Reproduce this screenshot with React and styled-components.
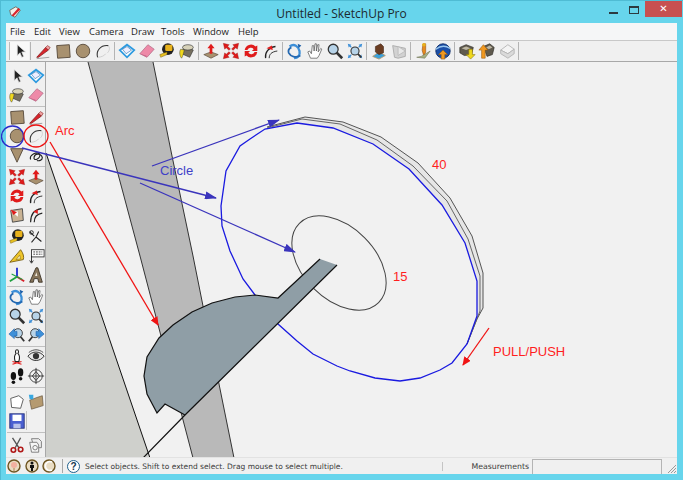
import styled, { createGlobalStyle } from "styled-components";

const GlobalStyle = createGlobalStyle`
  html, body { margin: 0; padding: 0; background: #67d5ec; }
  body { width: 683px; height: 480px; overflow: hidden; }
`;

const BROWN = "#a8916f";
const RED = "#e01b1b";
const BLUE = "#3d8fd8";

const moveArm = "M1.500 1.500l6.500 1.500-1.700 1.700 3 3-1.600 1.600-3-3L3 8z";

// 20x20 toolbar drawings
const icons = {
  select: <path d="M7 3v12l3-3 2 5 2-1-2-5h4z" fill="#222" stroke="#ddd" strokeWidth=".8" />,
  pencil: (
    <>
      <path d="M3 17l10-11 3 3-11 8z" fill="#d8242c" stroke="#7a1515" strokeWidth=".8" />
      <path d="M13 6l2-2 3 2-2 3z" fill="#f0a0a0" stroke="#7a1515" strokeWidth=".6" />
      <path d="M3 18.500l14-1.500" stroke="#999" fill="none" />
    </>
  ),
  rect: <path d="M3 4l14-1 1 14-14 1z" fill={BROWN} stroke="#56483a" />,
  circle: <circle cx="10" cy="10" r="7.500" fill={BROWN} stroke="#56483a" />,
  arc: (
    <>
      <path d="M4 17C2 10 7 3 16 4" fill="none" stroke="#333" strokeWidth="1.200" />
      <path d="M16 4c2 3 1 6-1 8M4 17c4 0 8-2 9-4" fill="none" stroke="#ccc" />
    </>
  ),
  polygon: <path d="M3 3h14l-7 15z" fill={BROWN} stroke="#56483a" />,
  freehand: <path d="M4 15c-2-5 8-10 10-6 2 5-8 9-6 3 1-4 8-4 9 1 0 3-4 4-6 3" fill="none" stroke="#222" strokeWidth="1.300" />,
  component: (
    <>
      <path d="M2 9l8-6 8 6-8 8z" fill="#fff" stroke="#2d9ae0" strokeWidth="2" />
      <path d="M5 8l5-3 5 4-6 4z" fill="#eef" stroke="#0d5f9c" strokeWidth=".6" />
    </>
  ),
  eraser: (
    <>
      <path d="M2 13L11 3l7 5-8 9z" fill="#ee8aa8" stroke="#a8607a" strokeWidth=".7" />
      <path d="M2 13l7 2 1 2z" fill="#c9688a" />
    </>
  ),
  tape: (
    <>
      <circle cx="11" cy="8" r="6.500" fill="#222" />
      <rect x="8" y="3" width="8" height="7" rx="1.500" fill="#e8b21c" />
      <path d="M2 14l8-3v3l-7 3z" fill="#e8c020" stroke="#6a5410" strokeWidth=".5" />
    </>
  ),
  paint: (
    <>
      <path d="M7 4l10 5-4 8-9-4z" fill="#77705f" stroke="#333" strokeWidth=".7" />
      <ellipse cx="11" cy="6" rx="6" ry="3" fill="#d6d1b8" stroke="#333" strokeWidth=".7" />
      <path d="M3 8c-2 3-1 8 1 10 2-3 2-6 3-9z" fill="#f0d81c" stroke="#333" strokeWidth=".5" />
    </>
  ),
  pushpull: (
    <>
      <path d="M2 14l8-3 8 3-8 4z" fill={BROWN} stroke="#56483a" strokeWidth=".7" />
      <path d="M10 2l4 5h-2.500v6h-3V7H6z" fill={RED} />
    </>
  ),
  move: (
    <g fill={RED} stroke="#8a1010" strokeWidth=".4">
      <path d={moveArm} />
      <path d={moveArm} transform="rotate(90 10 10)" />
      <path d={moveArm} transform="rotate(180 10 10)" />
      <path d={moveArm} transform="rotate(270 10 10)" />
    </g>
  ),
  rotate: (
    <>
      <path d="M3 9a7 7 0 0 1 12-4l2-1v6h-6l2-2a4 4 0 0 0-7 1z" fill={RED} />
      <path d="M17 11a7 7 0 0 1-12 4l-2 1v-6h6l-2 2a4 4 0 0 0 7-1z" fill={RED} />
    </>
  ),
  follow: (
    <>
      <path d="M4 18c-1-6 3-12 11-13" fill="none" stroke="#222" strokeWidth="1.400" />
      <path d="M8 18c0-4 2-7 9-8" fill="none" stroke="#222" />
      <path d="M5 7l6-3 1 5z" fill={RED} />
    </>
  ),
  scale: (
    <>
      <path d="M3 5l13-2 1 13-12 2z" fill="#c9b394" stroke="#444" />
      <path d="M3 5l8 1v6z" fill="#fff" />
      <path d="M3 4l7 3-4 3z" fill={RED} />
    </>
  ),
  offset: (
    <>
      <path d="M4 18C4 10 8 4 16 3M8 18c0-5 3-9 9-10" fill="none" stroke="#222" strokeWidth="1.300" />
      <path d="M7 6l5-2v5z" fill={RED} />
    </>
  ),
  dim: (
    <>
      <path d="M3 4l5 5M13 4l-3 6 6 5M10 10l-5 6" fill="none" stroke="#222" strokeWidth="1.200" />
      <circle cx="5" cy="5" r="2" fill="none" stroke="#222" />
    </>
  ),
  protractor: (
    <>
      <path d="M2 17L14 3c3 4 4 8 3 11z" fill="#eec52a" stroke="#7a6010" />
      <path d="M9 14l4-5 1 4z" fill="#fff2b0" stroke="#7a6010" strokeWidth=".6" />
    </>
  ),
  label: (
    <>
      <rect x="5" y="3" width="14" height="8" fill="#fff" stroke="#333" />
      <path d="M7 5.500h10M7 8h10" stroke="#333" strokeDasharray="2 1" />
      <path d="M5 10v7M3 15l2 3 2-3" fill="none" stroke="#222" />
    </>
  ),
  axes: (
    <>
      <path d="M10 2v10" stroke="#1d2ad0" strokeWidth="2" />
      <path d="M10 12l8 5" stroke="#d8202a" strokeWidth="2" />
      <path d="M10 12l-8 5" stroke="#20a040" strokeWidth="2" />
      <path d="M4 9l12 6" stroke="#20a040" strokeWidth="1.200" />
    </>
  ),
  text3d: (
    <>
      <path d="M3 18L10 2h2l5 16h-4l-1-4H8l-1 4z" fill="#86745a" stroke="#3d3428" />
      <path d="M9 11l1.500-4 1 4z" fill="#efe9dd" />
    </>
  ),
  orbit: (
    <>
      <path d="M4 5c5-4 10 0 11 5s-2 8-6 8" fill="none" stroke={BLUE} strokeWidth="2.600" />
      <path d="M16 15c-5 3-11 1-13-3-1-3 1-5 3-6" fill="none" stroke="#2468b0" strokeWidth="2" />
      <path d="M13 2l4 2-3 3z" fill="#1d5fa8" />
    </>
  ),
  hand: <path d="M5 18L2 11l2-1 2 3 1-9 1.500 0 .5 6 1-8h1.500l0 8 1.500-7h1.500l-1 8 3-4 1 1-3 7-2 3z" fill="#fff" stroke="#555" strokeWidth=".8" />,
  zoom: (
    <>
      <path d="M11 11l7 7" stroke="#333" strokeWidth="3" />
      <circle cx="8" cy="8" r="5.500" fill="#b7d3e8" stroke="#333" strokeWidth="1.400" />
    </>
  ),
  zoomExtents: (
    <>
      <path d="M2 2l4 1-3 3zM18 2l-1 4-3-3zM2 18l1-4 3 3zM18 18l-4-1 3-3z" fill={BLUE} />
      <path d="M4 4l2 2M16 4l-2 2M4 16l2-2" stroke={BLUE} strokeWidth="1.400" />
      <path d="M12 12l5 5" stroke="#333" strokeWidth="2" />
      <circle cx="10" cy="10" r="4.500" fill="#b7d3e8" stroke="#333" strokeWidth="1.200" />
    </>
  ),
  prev: (
    <>
      <circle cx="11" cy="8" r="5" fill="#b7d3e8" stroke="#333" />
      <path d="M1 9l6-6v3h3v5H7v3z" fill={BLUE} stroke="#1d5fa8" strokeWidth=".6" />
      <path d="M14 12l4 5" stroke="#333" strokeWidth="2" />
    </>
  ),
  next: (
    <>
      <circle cx="9" cy="8" r="5" fill="#b7d3e8" stroke="#333" />
      <path d="M19 9l-6-6v3h-3v5h3v3z" fill={BLUE} stroke="#1d5fa8" strokeWidth=".6" />
      <path d="M6 12l-4 5" stroke="#333" strokeWidth="2" />
    </>
  ),
  position: (
    <>
      <path d="M5 18l10-3M5 15l10 3" stroke={RED} strokeWidth="1.200" />
      <path d="M10 2c-2 0-2 3-1 4-2 2-2 6-1 9h4c1-3 1-7-1-9 1-1 1-4-1-4z" fill="#fff" stroke="#222" strokeWidth="1.200" />
    </>
  ),
  look: (
    <>
      <path d="M1 9c5-6 13-6 18 0-4 6-13 7-18 0z" fill="#e8e8e8" stroke="#222" />
      <circle cx="10" cy="9" r="3.500" fill="#333" />
      <path d="M2 5c5-4 11-4 16 0" fill="none" stroke="#444" />
    </>
  ),
  walk: (
    <>
      <ellipse cx="6" cy="10" rx="3" ry="4.500" fill="#111" />
      <circle cx="6" cy="17" r="2" fill="#111" />
      <ellipse cx="14" cy="6" rx="3" ry="4.500" fill="#111" />
      <circle cx="14" cy="13" r="2" fill="#111" />
    </>
  ),
  section: (
    <>
      <circle cx="10" cy="10" r="7" fill="#f4f4f4" stroke="#333" />
      <path d="M10 1v18M1 10h18" stroke="#333" />
      <path d="M10 5l4 5-4 5-4-5z" fill="none" stroke="#333" />
    </>
  ),
  newFile: <path d="M3 6l9-3 5 4-3 10-10-1z" fill="#fff" stroke="#555" />,
  open: (
    <>
      <path d="M3 8l8-3 6-2 1 11-13 4z" fill="#b59a70" stroke="#5c4d38" strokeWidth=".7" />
      <path d="M2 2h5v5H3z" fill="#39a8e0" />
    </>
  ),
  save: (
    <>
      <rect x="2" y="2" width="16" height="16" fill="#4a5fd0" stroke="#28337c" />
      <rect x="5" y="3" width="10" height="7" fill="#fff" />
      <rect x="6" y="13" width="8" height="5" fill="#b9c2ea" />
    </>
  ),
  cut: (
    <>
      <path d="M5 2l7 11M14 2L8 13" stroke="#555" strokeWidth="1.500" />
      <circle cx="6" cy="15.500" r="2.500" fill="none" stroke="#b01818" strokeWidth="1.800" />
      <circle cx="14" cy="15" r="2.500" fill="none" stroke="#b01818" strokeWidth="1.800" />
    </>
  ),
  copy: (
    <>
      <path d="M5 3h8l3 3v7H8z" fill="#eee" stroke="#777" />
      <path d="M3 7h8l2 3v8H5z" fill="#f6f6f6" stroke="#777" />
      <circle cx="9" cy="13" r="2.500" fill="none" stroke="#777" />
    </>
  ),
  warehouse: (
    <>
      <path d="M3 16l7-5 7 4-7 4z" fill="#3ba0d8" stroke="#b59a70" />
      <path d="M6 5l6-3 3 3v7l-5 2-4-3z" fill="#6b3d22" stroke="#3c2010" strokeWidth=".6" />
    </>
  ),
  share: (
    <>
      <path d="M3 4l14 3v9l-8 2-4-1z" fill="#d2d2d2" stroke="#aaa" />
      <path d="M9 5l8 5-8 5z" fill="#e8e8e8" stroke="#bbb" />
    </>
  ),
  place: (
    <>
      <path d="M9 9l1-7 3 0 0 9-2 5z" fill="#e88a1c" stroke="#8a4c10" strokeWidth=".6" />
      <circle cx="11" cy="3" r="2" fill="#e8b21c" />
      <path d="M3 17l5-1 10-6-6 8z" fill="#a8b080" stroke="#6a7050" strokeWidth=".6" />
    </>
  ),
  earth: (
    <>
      <circle cx="10" cy="10" r="8" fill="#1b4fa8" stroke="#112f6a" />
      <path d="M2 8c5-4 11-4 16-1" fill="none" stroke="#9ac7ee" strokeWidth="1.500" />
      <path d="M10 9l5 5h-3v5H8v-5H5z" fill="#f09820" stroke="#91560c" strokeWidth=".6" />
    </>
  ),
  modelGet: (
    <>
      <path d="M2 6l7-3 8 3-2 8-8 1-5-3z" fill="#5f5a4e" stroke="#26241f" strokeWidth=".7" />
      <path d="M4 7l5-2 5 2-5 2z" fill="#bdb7a4" />
      <path d="M12 8h4v6h3l-5 5-5-5h3z" fill="#f0d81c" stroke="#7e6c0c" strokeWidth=".6" />
    </>
  ),
  modelSend: (
    <>
      <path d="M6 5l7-3 5 4-2 8-6 2z" fill="#5f5a4e" stroke="#26241f" strokeWidth=".7" />
      <path d="M9 6l4-2 3 2-4 2z" fill="#bdb7a4" />
      <path d="M6 3l5 6H8v9H4V9H1z" fill="#f09820" stroke="#91560c" strokeWidth=".6" />
    </>
  ),
  modelShare: (
    <>
      <path d="M3 9l8-6 7 5-7 5z" fill="#f4f4f4" stroke="#b4b4b4" />
      <path d="M3 9v4l8 5 7-5V8l-7 5z" fill="#dadada" stroke="#b4b4b4" />
    </>
  ),
  blank: null,
};

const Icon = ({ name, size = 18 }) => (
  <svg width={size} height={size} viewBox="0 0 20 20">
    {icons[name]}
  </svg>
);

const BadgeIcon = ({ children }) => (
  <svg width="14" height="14" viewBox="0 0 14 14">
    <circle cx="7" cy="7" r="6" fill="#e9dcc3" stroke="#6d5420" strokeWidth="1.400" />
    {children}
  </svg>
);

const topGroups = [
  ["select"],
  ["pencil", "rect", "circle", "arc"],
  ["component", "eraser", "tape", "paint"],
  ["pushpull", "move", "rotate", "follow"],
  ["orbit", "hand", "zoom", "zoomExtents"],
  ["warehouse", "share"],
  ["place", "earth"],
];

const sideGroups = [
  { rows: [["select", "component"], ["paint", "eraser"]] },
  { rows: [["rect", "pencil"], ["circle", "arc"], ["polygon", "freehand"]] },
  { rows: [["move", "pushpull"], ["rotate", "follow"], ["scale", "offset"]] },
  { rows: [["tape", "dim"], ["protractor", "label"], ["axes", "text3d"]] },
  { rows: [["orbit", "hand"], ["zoom", "zoomExtents"], ["prev", "next"]] },
  { rows: [["position", "look"], ["walk", "section"]], gap: 4 },
  { rows: [["newFile", "open"], ["save", "blank"]], gap: 2 },
  { rows: [["cut", "copy"]] },
];

const menus = [
  ["File", 24],
  ["Edit", 25],
  ["View", 30],
  ["Camera", 42],
  ["Draw", 30],
  ["Tools", 32],
  ["Window", 45],
  ["Help", 30],
];

const App = () => (
  <Page>
    <GlobalStyle />
    <TitleBar>
      <AppLogo viewBox="0 0 16 16">
        <path d="M2 6l7-4 5 4-6 8-5-3z" fill="#f2efe8" stroke="#6d6357" />
        <path d="M4 12l8-9 2 2-8 8z" fill="#d8242c" />
      </AppLogo>
      <Title>Untitled - SketchUp Pro</Title>
      <WindowControls>
        <MinButton />
        <MaxButton />
        <CloseButton>✕</CloseButton>
      </WindowControls>
    </TitleBar>
    <AppBody>
      <MenuBar>
        {menus.map(([label, width]) => (
          <MenuItem key={label} $width={width}>
            {label}
          </MenuItem>
        ))}
      </MenuBar>
      <TopToolbar>
        {topGroups.map((group, i) => (
          <ToolGroup key={i}>
            {group.map((name) => (
              <ToolButton key={name} $pressed={name === "select"}>
                <Icon name={name} />
              </ToolButton>
            ))}
          </ToolGroup>
        ))}
        <ToolGroup>
          {["modelGet", "modelSend", "modelShare"].map((name) => (
            <ToolButton key={name}>
              <Icon name={name} />
            </ToolButton>
          ))}
        </ToolGroup>
      </TopToolbar>
      <Workspace>
        <SideToolbar>
          {sideGroups.map((group, i) => (
            <SideGroup key={i} $gap={group.gap}>
              {group.rows.map((row, j) => (
                <SideRow key={j}>
                  {row.map((name) => (
                    <SideButton key={name} $divider={name === "blank"}>
                      {name !== "blank" && <Icon name={name} />}
                    </SideButton>
                  ))}
                </SideRow>
              ))}
            </SideGroup>
          ))}
        </SideToolbar>
        <Viewport>
          <svg width="631" height="396" viewBox="46 61 631 396">
            <polygon points="46,152 150,457 46,457" fill="#cfd0cc" />
            <path d="M46 152L150 457" stroke="#111" fill="none" />
            <polygon points="88,61 153,61 172,155 193,255 203,305 219,383 234,457 193,457 140,255" fill="#b9b9b9" />
            <path d="M88 61L140 255 193 457M153 61L172 155 193 255 203 305 219 383 234 457" stroke="#333" fill="none" />
            <polygon
              points="267,126 305,116 343,121 381,136 418,162 450,197 472,235 483,272 483,307 477,318 467,343 477,315 477,280 465,242 442,204 409,168 373,143 333,127 297,122"
              fill="#e6e6e6"
            />
            <polyline
              points="267,126 305,116 343,121 381,136 418,162 450,197 472,235 483,272 483,307 477,318 467,343"
              fill="none"
              stroke="#555"
            />
            <polyline
              points="267,127 302,118 340,123 377,139 413,165 447,200 468,238 480,275 480,310 467,343"
              fill="none"
              stroke="#666"
            />
            <polygon
              points="250,138 265,128 297,122 333,127 373,143 409,168 442,204 465,242 477,280 477,315 467,343 452,362 440,369 420,377 400,380 375,377 350,370 337,365 313,353 297,340 278,323 255,294 243,278 230,250 222,225 221,205 226,170 240,145"
              fill="none"
              stroke="#1a1ae0"
              strokeWidth="1.300"
            />
            <ellipse cx="339" cy="262" rx="56" ry="36" transform="rotate(45 339 262)" fill="none" stroke="#444" />
            <polygon
              points="320,258 337,264 185,414 165,403 157,412 147,393 144,375 147,356 159,337 173,324 192,311 212,302 235,296 255,294 278,297"
              fill="#8f9ea6"
            />
            <path
              d="M143 457L185 414 337 264M185 414L165 403 157 412 147 393 144 375 147 356 159 337 173 324 192 311 212 302 235 296 255 294 278 297 320 258"
              fill="none"
              stroke="#111"
              strokeWidth="1.200"
            />
          </svg>
        </Viewport>
      </Workspace>
      <StatusBar>
        <StatusBadges>
          <BadgeIcon>
            <circle cx="7" cy="6" r="3" fill="#f2b0a0" />
            <path d="M7 9v3" stroke="#b08050" />
          </BadgeIcon>
          <BadgeIcon>
            <circle cx="7" cy="4" r="1.500" fill="#111" />
            <path d="M5 6h4v3H8v3H6V9H5z" fill="#111" />
          </BadgeIcon>
          <BadgeIcon>
            <path d="M10 3a4.500 4.500 0 1 0 0 8" fill="none" stroke="#fff" strokeWidth="1.500" />
          </BadgeIcon>
        </StatusBadges>
        <HelpBadge>?</HelpBadge>
        <StatusText>Select objects. Shift to extend select. Drag mouse to select multiple.</StatusText>
        <MeasureLabel>Measurements</MeasureLabel>
        <MeasureBox />
        <ResizeGrip viewBox="0 0 10 10">
          <path d="M9 1L1 9M9 4L4 9M9 7L7 9" stroke="#999" fill="none" />
        </ResizeGrip>
      </StatusBar>
    </AppBody>
    <Annotations viewBox="0 0 683 480">
      <defs>
        <marker id="redHead" markerWidth="9" markerHeight="8" refX="8" refY="4" orient="auto" markerUnits="userSpaceOnUse">
          <path d="M0 0L9 4 0 8z" fill="#f01414" />
        </marker>
        <marker id="blueHead" markerWidth="12" markerHeight="8" refX="11" refY="4" orient="auto" markerUnits="userSpaceOnUse">
          <path d="M0 0L12 4 0 8z" fill="#3a34bc" />
        </marker>
      </defs>
      <ellipse cx="12.500" cy="136.500" rx="11" ry="10.500" fill="none" stroke="#2a2ac8" strokeWidth="1.300" />
      <ellipse cx="36" cy="136" rx="12" ry="11" fill="none" stroke="#ee1212" strokeWidth="1.300" />
      <path d="M50 142L158 325" stroke="#f01414" strokeWidth="1.300" markerEnd="url(#redHead)" />
      <path d="M489 328L463 365" stroke="#f01414" strokeWidth="1.300" markerEnd="url(#redHead)" />
      <g stroke="#3a34bc" strokeWidth="1.300">
        <path d="M152 166L279 120" markerEnd="url(#blueHead)" />
        <path d="M22 148L216 198" markerEnd="url(#blueHead)" />
        <path d="M140 183L295 252" markerEnd="url(#blueHead)" />
      </g>
      <AnnotationText x="55" y="135" fill="#ff1e1e">Arc</AnnotationText>
      <AnnotationText x="160" y="175" fill="#4040c8">Circle</AnnotationText>
      <AnnotationText x="432" y="169" fill="#ff1e1e">40</AnnotationText>
      <AnnotationText x="393" y="281" fill="#ff1e1e">15</AnnotationText>
      <AnnotationText x="493" y="356" fill="#ff1e1e">PULL/PUSH</AnnotationText>
    </Annotations>
  </Page>
);

const Page = styled.div`
  position: relative;
  width: 683px;
  height: 480px;
  display: flex;
  flex-direction: column;
  padding: 0 6px 6px 5px;
  box-sizing: border-box;
  background: #67d5ec;
  border: 1px solid #4fbcd4;
  border-width: 1px 0 0 1px;
  overflow: hidden;
`;
const TitleBar = styled.div`
  position: relative;
  height: 22px;
  flex: none;
  display: flex;
  align-items: center;
  justify-content: center;
`;
const AppLogo = styled.svg`
  position: absolute;
  left: 2px;
  top: 3px;
  width: 14px;
  height: 16px;
`;
const Title = styled.div`
  font: 12px "Open Sans", "Liberation Sans", sans-serif;
  color: #1d2a30;
  margin-top: 2px;
`;
const WindowControls = styled.div`
  position: absolute;
  right: -5px;
  top: 0;
  display: flex;
  align-items: flex-start;
`;
const MinButton = styled.div`
  width: 9px;
  height: 2px;
  background: #2c3a40;
  margin: 11px 11px 0 0;
`;
const MaxButton = styled.div`
  width: 8px;
  height: 5px;
  border: 1px solid #2c3a40;
  border-top-width: 2px;
  margin: 5px 6px 0 0;
`;
const CloseButton = styled.div`
  width: 37px;
  height: 16px;
  background: #c75050;
  color: #fff;
  font: bold 10px/16px "DejaVu Sans", sans-serif;
  text-align: center;
`;
const AppBody = styled.div`
  flex: 1;
  min-height: 0;
  display: flex;
  flex-direction: column;
  background: #f0f0f0;
`;
const MenuBar = styled.div`
  height: 17px;
  flex: none;
  display: flex;
  align-items: center;
  padding-left: 4px;
  background: #f5f6f7;
`;
const MenuItem = styled.div`
  width: ${(p) => p.$width}px;
  font: 9.500px "Open Sans", "Liberation Sans", sans-serif;
  color: #1c1c1c;
`;
const TopToolbar = styled.div`
  height: 20px;
  flex: none;
  display: flex;
  padding-left: 3px;
  border-top: 1px solid #c8c8c8;
  border-bottom: 1px solid #a8a8a8;
`;
const ToolGroup = styled.div`
  display: flex;
  padding: 0 1px 0 0;
  margin-right: 2px;
  border-right: 1px solid #b4b4b4;
  height: 18px;
  margin-top: 1px;
`;
const ToolButton = styled.div`
  width: 20px;
  height: 18px;
  display: flex;
  align-items: center;
  justify-content: center;
  box-sizing: border-box;
  background: ${(p) => (p.$pressed ? "#f9f9f9" : "transparent")};
  border-left: ${(p) => (p.$pressed ? "1px solid #bbb" : "none")};
`;
const Workspace = styled.div`
  flex: 1;
  min-height: 0;
  display: flex;
`;
const SideToolbar = styled.div`
  width: 40px;
  flex: none;
  padding: 4px 0 0 1px;
  box-sizing: border-box;
  overflow: hidden;
  border-right: 1px solid #a8a8a8;
`;
const SideGroup = styled.div`
  padding-bottom: 2px;
  margin-bottom: ${(p) => p.$gap || 0}px;
  border-bottom: 1px solid #c0c0c0;
  &:last-child {
    border-bottom: none;
  }
`;
const SideRow = styled.div`
  display: flex;
  height: 19px;
`;
const SideButton = styled.div`
  width: 19px;
  height: 19px;
  display: flex;
  align-items: center;
  justify-content: center;
  box-sizing: border-box;
  border-left: ${(p) => (p.$divider ? "1px solid #c0c0c0" : "none")};
`;
const Viewport = styled.div`
  flex: 1;
  min-width: 0;
  background: #f1f1f1;
  overflow: hidden;
  svg {
    display: block;
  }
`;
const StatusBar = styled.div`
  position: relative;
  height: 17px;
  flex: none;
  display: flex;
  align-items: center;
  background: #f0f0f0;
  border-top: 1px solid #e2e2e2;
  box-sizing: border-box;
`;
const StatusBadges = styled.div`
  display: flex;
  gap: 3.500px;
  padding: 0 6px 0 1px;
  margin-right: 4px;
  border-right: 1px solid #a8a8a8;
  height: 14px;
`;
const HelpBadge = styled.div`
  width: 11px;
  height: 11px;
  flex: none;
  border: 1.500px solid #1d5f8c;
  border-radius: 50%;
  background: #fff;
  color: #16384f;
  font: bold 10px/11px "Liberation Sans", sans-serif;
  text-align: center;
  margin-right: 5px;
`;
const StatusText = styled.div`
  font: 7.500px "DejaVu Sans", sans-serif;
  color: #3a3a3a;
  white-space: nowrap;
  flex: 1;
`;
const MeasureLabel = styled.div`
  font: 7.800px "DejaVu Sans", sans-serif;
  color: #3a3a3a;
  margin-right: 3px;
  padding-left: 28px;
  border-left: 1px solid #c4c4c4;
`;
const MeasureBox = styled.div`
  width: 128px;
  height: 14px;
  margin: 1px 15px 0 0;
  border: 1px solid #b4b4b4;
  border-bottom: none;
  background: #f0f0f0;
`;
const ResizeGrip = styled.svg`
  position: absolute;
  right: 0;
  bottom: 0;
  width: 10px;
  height: 10px;
`;
const Annotations = styled.svg`
  position: absolute;
  left: -1px;
  top: -1px;
  width: 683px;
  height: 480px;
  pointer-events: none;
`;
const AnnotationText = styled.text`
  font: 13px "Liberation Sans", sans-serif;
`;

export default App;
